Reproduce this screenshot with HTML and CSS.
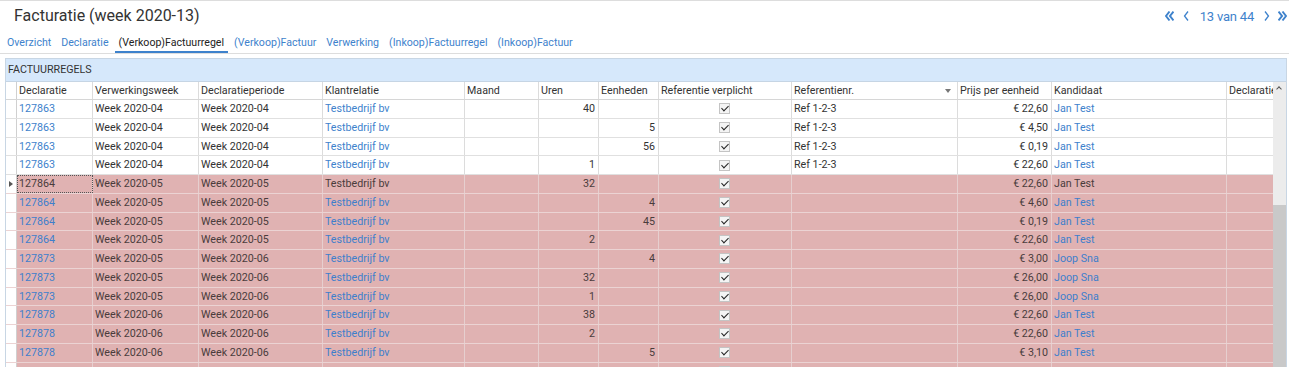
FILE: index.html
```html
<!DOCTYPE html>
<html lang="nl">
<head>
  <meta charset="UTF-8" />
  <title>Facturatie (week 2020-13)</title>
  <link rel="stylesheet" href="styles.css">
</head>
<body>

  <div class="topbar">
    <h1 class="title">Facturatie (week 2020-13)</h1>
    <div class="pager">
      <svg class="pg-icon dbl" width="9" height="12" viewBox="0 0 9 12"><path d="M4.5 1.5 L1 6 L4.5 10.5 M8.5 1.5 L5 6 L8.5 10.5" /></svg>
      <svg class="pg-icon prev" width="6" height="12" viewBox="0 0 6 12"><path d="M5 1.5 L1.5 6 L5 10.5" /></svg>
      <span class="pg-text">13 van 44</span>
      <svg class="pg-icon next" width="6" height="12" viewBox="0 0 6 12"><path d="M1 1.5 L4.5 6 L1 10.5" /></svg>
      <svg class="pg-icon dbl" width="9" height="12" viewBox="0 0 9 12"><path d="M0.5 1.5 L4 6 L0.5 10.5 M4.5 1.5 L8 6 L4.5 10.5" /></svg>
    </div>
  </div>

  <nav class="tabs">
    <a class="tab">Overzicht</a>
    <a class="tab">Declaratie</a>
    <a class="tab active">(Verkoop)Factuurregel</a>
    <a class="tab">(Verkoop)Factuur</a>
    <a class="tab">Verwerking</a>
    <a class="tab">(Inkoop)Factuurregel</a>
    <a class="tab">(Inkoop)Factuur</a>
  </nav>

  <section class="panel">
    <div class="panel-head">FACTUURREGELS</div>

    <div class="grid-wrap">
      <div class="grid">
        <!-- header -->
        <div class="row head">
          <div class="c ind"></div>
          <div class="c">Declaratie</div>
          <div class="c">Verwerkingsweek</div>
          <div class="c">Declaratieperiode</div>
          <div class="c">Klantrelatie</div>
          <div class="c">Maand</div>
          <div class="c">Uren</div>
          <div class="c">Eenheden</div>
          <div class="c">Referentie verplicht</div>
          <div class="c sortable">Referentienr.<span class="caret"></span></div>
          <div class="c">Prijs per eenheid</div>
          <div class="c">Kandidaat</div>
          <div class="c last">Declaratie</div>
        </div>

        <!-- rows -->
        <div class="row">
          <div class="c ind"></div>
          <div class="c link">127863</div><div class="c">Week 2020-04</div><div class="c">Week 2020-04</div>
          <div class="c link">Testbedrijf bv</div><div class="c"></div><div class="c num">40</div><div class="c num"></div>
          <div class="c chk"><span class="box"></span></div><div class="c">Ref 1-2-3</div>
          <div class="c num">€ 22,60</div><div class="c link">Jan Test</div><div class="c last"></div>
        </div>
        <div class="row">
          <div class="c ind"></div>
          <div class="c link">127863</div><div class="c">Week 2020-04</div><div class="c">Week 2020-04</div>
          <div class="c link">Testbedrijf bv</div><div class="c"></div><div class="c num"></div><div class="c num">5</div>
          <div class="c chk"><span class="box"></span></div><div class="c">Ref 1-2-3</div>
          <div class="c num">€ 4,50</div><div class="c link">Jan Test</div><div class="c last"></div>
        </div>
        <div class="row">
          <div class="c ind"></div>
          <div class="c link">127863</div><div class="c">Week 2020-04</div><div class="c">Week 2020-04</div>
          <div class="c link">Testbedrijf bv</div><div class="c"></div><div class="c num"></div><div class="c num">56</div>
          <div class="c chk"><span class="box"></span></div><div class="c">Ref 1-2-3</div>
          <div class="c num">€ 0,19</div><div class="c link">Jan Test</div><div class="c last"></div>
        </div>
        <div class="row">
          <div class="c ind"></div>
          <div class="c link">127863</div><div class="c">Week 2020-04</div><div class="c">Week 2020-04</div>
          <div class="c link">Testbedrijf bv</div><div class="c"></div><div class="c num">1</div><div class="c num"></div>
          <div class="c chk"><span class="box"></span></div><div class="c">Ref 1-2-3</div>
          <div class="c num">€ 22,60</div><div class="c link">Jan Test</div><div class="c last"></div>
        </div>
        <div class="row warn current">
          <div class="c ind"><span class="pointer"></span></div>
          <div class="c focus">127864</div><div class="c">Week 2020-05</div><div class="c">Week 2020-05</div>
          <div class="c">Testbedrijf bv</div><div class="c"></div><div class="c num">32</div><div class="c num"></div>
          <div class="c chk"><span class="box"></span></div><div class="c"></div>
          <div class="c num">€ 22,60</div><div class="c">Jan Test</div><div class="c last"></div>
        </div>
        <div class="row warn">
          <div class="c ind"></div>
          <div class="c link">127864</div><div class="c">Week 2020-05</div><div class="c">Week 2020-05</div>
          <div class="c link">Testbedrijf bv</div><div class="c"></div><div class="c num"></div><div class="c num">4</div>
          <div class="c chk"><span class="box"></span></div><div class="c"></div>
          <div class="c num">€ 4,60</div><div class="c link">Jan Test</div><div class="c last"></div>
        </div>
        <div class="row warn">
          <div class="c ind"></div>
          <div class="c link">127864</div><div class="c">Week 2020-05</div><div class="c">Week 2020-05</div>
          <div class="c link">Testbedrijf bv</div><div class="c"></div><div class="c num"></div><div class="c num">45</div>
          <div class="c chk"><span class="box"></span></div><div class="c"></div>
          <div class="c num">€ 0,19</div><div class="c link">Jan Test</div><div class="c last"></div>
        </div>
        <div class="row warn">
          <div class="c ind"></div>
          <div class="c link">127864</div><div class="c">Week 2020-05</div><div class="c">Week 2020-05</div>
          <div class="c link">Testbedrijf bv</div><div class="c"></div><div class="c num">2</div><div class="c num"></div>
          <div class="c chk"><span class="box"></span></div><div class="c"></div>
          <div class="c num">€ 22,60</div><div class="c link">Jan Test</div><div class="c last"></div>
        </div>
        <div class="row warn">
          <div class="c ind"></div>
          <div class="c link">127873</div><div class="c">Week 2020-05</div><div class="c">Week 2020-06</div>
          <div class="c link">Testbedrijf bv</div><div class="c"></div><div class="c num"></div><div class="c num">4</div>
          <div class="c chk"><span class="box"></span></div><div class="c"></div>
          <div class="c num">€ 3,00</div><div class="c link">Joop Sna</div><div class="c last"></div>
        </div>
        <div class="row warn">
          <div class="c ind"></div>
          <div class="c link">127873</div><div class="c">Week 2020-05</div><div class="c">Week 2020-06</div>
          <div class="c link">Testbedrijf bv</div><div class="c"></div><div class="c num">32</div><div class="c num"></div>
          <div class="c chk"><span class="box"></span></div><div class="c"></div>
          <div class="c num">€ 26,00</div><div class="c link">Joop Sna</div><div class="c last"></div>
        </div>
        <div class="row warn">
          <div class="c ind"></div>
          <div class="c link">127873</div><div class="c">Week 2020-05</div><div class="c">Week 2020-06</div>
          <div class="c link">Testbedrijf bv</div><div class="c"></div><div class="c num">1</div><div class="c num"></div>
          <div class="c chk"><span class="box"></span></div><div class="c"></div>
          <div class="c num">€ 26,00</div><div class="c link">Joop Sna</div><div class="c last"></div>
        </div>
        <div class="row warn">
          <div class="c ind"></div>
          <div class="c link">127878</div><div class="c">Week 2020-06</div><div class="c">Week 2020-06</div>
          <div class="c link">Testbedrijf bv</div><div class="c"></div><div class="c num">38</div><div class="c num"></div>
          <div class="c chk"><span class="box"></span></div><div class="c"></div>
          <div class="c num">€ 22,60</div><div class="c link">Jan Test</div><div class="c last"></div>
        </div>
        <div class="row warn">
          <div class="c ind"></div>
          <div class="c link">127878</div><div class="c">Week 2020-06</div><div class="c">Week 2020-06</div>
          <div class="c link">Testbedrijf bv</div><div class="c"></div><div class="c num">2</div><div class="c num"></div>
          <div class="c chk"><span class="box"></span></div><div class="c"></div>
          <div class="c num">€ 22,60</div><div class="c link">Jan Test</div><div class="c last"></div>
        </div>
        <div class="row warn">
          <div class="c ind"></div>
          <div class="c link">127878</div><div class="c">Week 2020-06</div><div class="c">Week 2020-06</div>
          <div class="c link">Testbedrijf bv</div><div class="c"></div><div class="c num"></div><div class="c num">5</div>
          <div class="c chk"><span class="box"></span></div><div class="c"></div>
          <div class="c num">€ 3,10</div><div class="c link">Jan Test</div><div class="c last"></div>
        </div>
        <!-- next row, only its top edge is in view -->
        <div class="row warn">
          <div class="c ind"></div>
          <div class="c"></div><div class="c"></div><div class="c"></div>
          <div class="c"></div><div class="c"></div><div class="c num"></div><div class="c num"></div>
          <div class="c chk"><span class="box"></span></div><div class="c"></div>
          <div class="c num"></div><div class="c"></div><div class="c last"></div>
        </div>
      </div>

      <!-- vertical scrollbar -->
      <div class="vscroll">
        <div class="vs-track"><span class="vs-up"></span></div>
        <div class="vs-thumb"></div>
      </div>
    </div>
  </section>

</body>
</html>
```

FILE: styles.css
```css
/*********************************
 * Page basics
 *********************************/
html, body {
  margin: 0;
  padding: 0;
  background: #ffffff;
  color: #333333;
  font-family: Roboto, "Noto Sans", Arial, sans-serif;
  font-size: 10.7px;
  overflow: hidden;
}
body {
  border-top: 1px solid #dddddd;
  height: 366px;
}

/* Title bar */
.topbar {
  display: flex;
  align-items: center;
  justify-content: space-between;
  height: 28px;
  padding: 0 2px 0 14px;
}
.title {
  margin: 0;
  font-size: 16px;
  font-weight: normal;
  color: #333333;
}
.pager {
  display: flex;
  align-items: center;
  color: #3e82cc;
  padding-top: 2px;
}
.pg-icon {
  fill: none;
  stroke: #3e82cc;
  stroke-width: 1.3;
}
.pg-icon.dbl {
  stroke-width: 2;
}
.pg-icon.prev {
  margin: 0 11px 0 9px;
}
.pg-icon.next {
  margin: 0 8px 0 10px;
}
.pg-text {
  font-size: 13px;
  letter-spacing: -0.2px;
}

/* Tabs */
.tabs {
  display: flex;
  align-items: flex-end;
  height: 24px;
  padding-left: 3px;
  border-bottom: 1px solid #dddddd;
}
.tab {
  padding: 0 4px 2px;
  margin-right: 2px;
  font-size: 10.6px;
  color: #3e82cc;
  cursor: pointer;
  border-bottom: 2px solid transparent;
}
.tab.active {
  color: #222222;
  border-bottom-color: #3e82cc;
}

/*============================
  Panel + grid
============================*/
.panel {
  margin: 4px 2px 0 5px;
  border: 1px solid #c8d6e4;
  border-bottom: none;
}
.panel-head {
  height: 22px;
  line-height: 22px;
  padding-left: 2px;
  background: #d6e8fb;
  border-bottom: 1px solid #c6d5e4;
  color: #333333;
}

.grid-wrap {
  display: flex;
  align-items: flex-start;
}
.grid {
  width: 1267px;
  flex: none;
}
.row {
  display: grid;
  grid-template-columns: 11px 76px 106px 124px 142px 74px 60px 60px 133px 166px 94px 175px 46px;
  height: 18.75px;
  box-sizing: border-box;
  border-bottom: 1px solid #e0e0e0;
  background: #ffffff;
}
.row.head {
  height: 18px;
  border-bottom-color: #d6d6d6;
}
.c {
  position: relative;
  box-sizing: border-box;
  padding: 0 3px 0 2px;
  border-right: 1px solid #dcdcdc;
  line-height: 17.5px;
  white-space: nowrap;
  overflow: hidden;
}
.head .c {
  line-height: 17px;
}
.c.last {
  border-right: none;
  padding-right: 0;
}
.c.ind {
  padding: 0;
  background: #ffffff;
  border-right-color: #d0d0d0;
}
.c.num {
  text-align: right;
}
.c.link {
  color: #3e82cc;
}
.c.chk {
  display: flex;
  align-items: center;
  justify-content: center;
}
.c.focus {
  outline: 1px dotted #555555;
  outline-offset: -1px;
}
.sortable .caret {
  position: absolute;
  right: 6px;
  top: 7px;
  border-left: 3px solid transparent;
  border-right: 3px solid transparent;
  border-top: 4px solid #777777;
}

/* checkbox */
.box {
  position: relative;
  width: 11px;
  height: 11px;
  box-sizing: border-box;
  border: 1px solid #c4c4c4;
  background: #f4f4f4;
}
.box::after {
  content: "";
  position: absolute;
  left: 3px;
  top: 0px;
  width: 3px;
  height: 6px;
  border: solid #222222;
  border-width: 0 1.6px 1.6px 0;
  transform: rotate(45deg);
}

/* current-row pointer */
.pointer {
  position: absolute;
  left: 3px;
  top: 6px;
  border-top: 3px solid transparent;
  border-bottom: 3px solid transparent;
  border-left: 4px solid #555555;
}

/* highlighted (pink) rows */
.row.warn {
  background: #e0b2b2;
  color: #4a3c3c;
  border-bottom-color: #ebd3d3;
}
.row.warn .c {
  border-right-color: #e6cfcf;
}
.row.warn .c.ind {
  border-right-color: #d0d0d0;
}
.row.warn .c.link {
  color: #3e7fcc;
}

/* scrollbar */
.vscroll {
  width: 13px;
  flex: none;
  display: flex;
  flex-direction: column;
}
.vs-track {
  position: relative;
  height: 123px;
  background: #ececec;
}
.vs-up {
  position: absolute;
  left: 4px;
  top: 5px;
  width: 3px;
  height: 3px;
  border-left: 1px solid #555555;
  border-top: 1px solid #555555;
  transform: rotate(45deg);
}
.vs-thumb {
  height: 170px;
  background: #c9c9c9;
}
```
